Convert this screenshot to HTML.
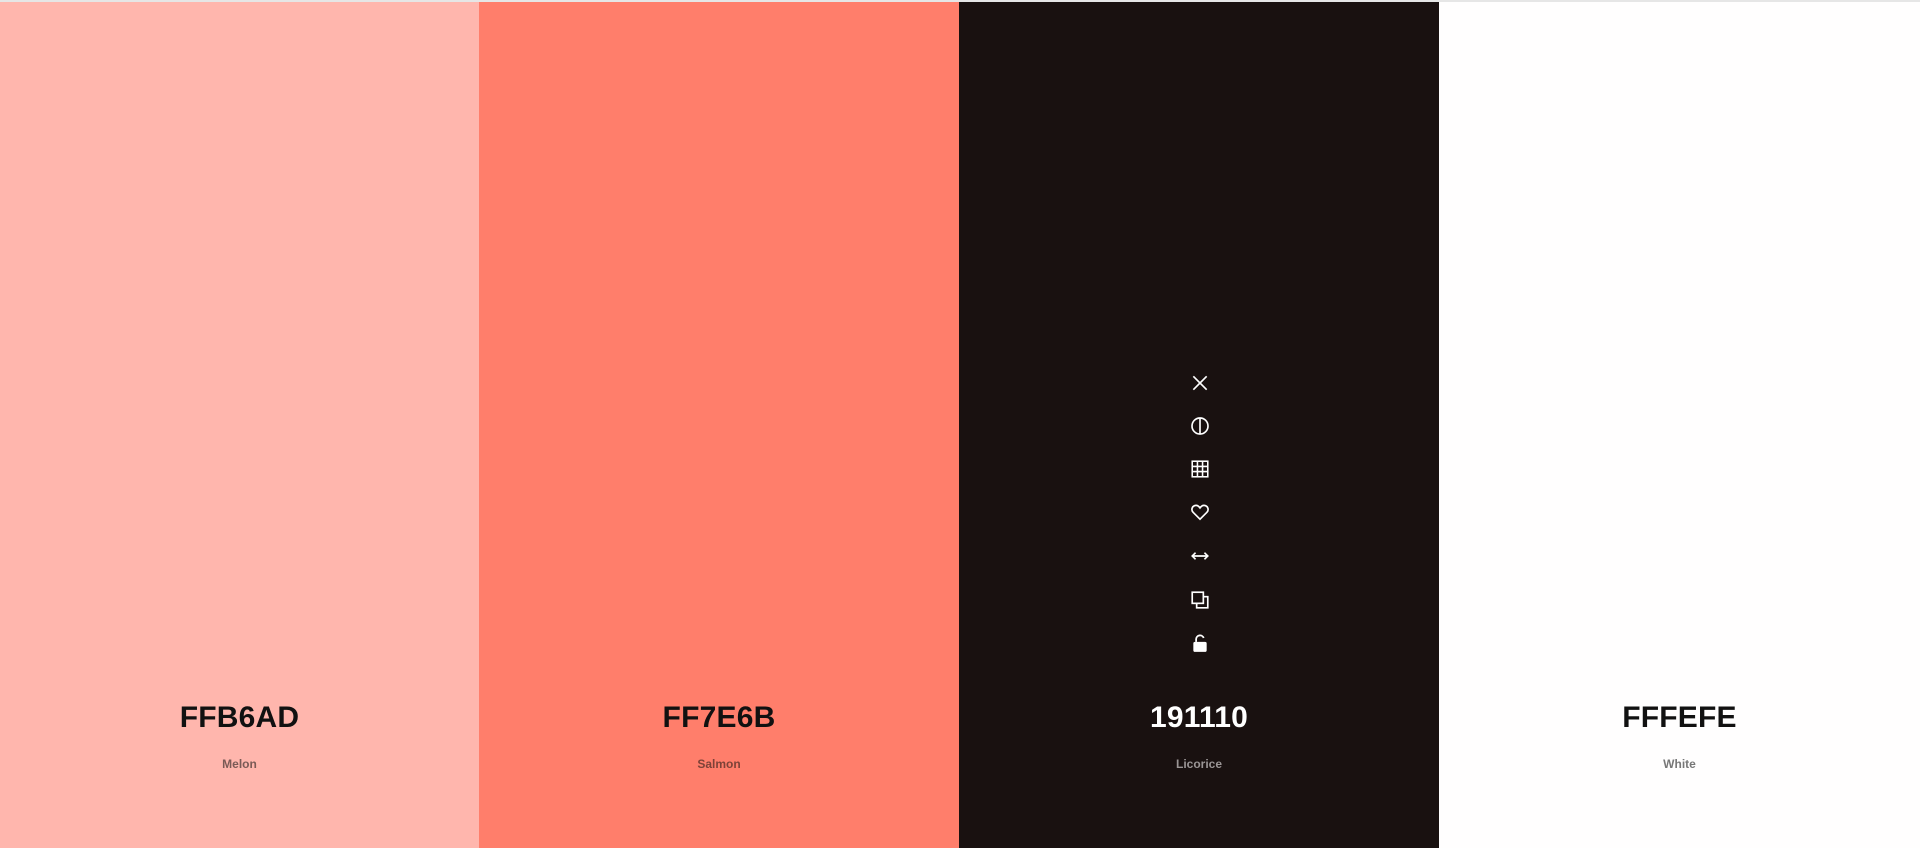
<!DOCTYPE html>
<html><head><style>
*{margin:0;padding:0;box-sizing:border-box}
body{width:1920px;height:848px;overflow:hidden;font-family:"Liberation Sans",sans-serif;background:#fff}
.top{position:absolute;left:0;top:0;width:1920px;height:2px;background:#e6e6e6}
.col{position:absolute;top:2px;height:846px;width:480px}
.hex{position:absolute;left:0;width:100%;top:699px;text-align:center;font-size:30px;font-weight:bold;letter-spacing:0.2px}
.nm{position:absolute;left:0;width:100%;top:755px;text-align:center;font-size:12px;font-weight:bold}
.ic{position:absolute;left:1190px;width:20px;height:20px}
</style></head><body>
<div class="top"></div>
<div class="col" style="left:0;width:479px;background:#FFB6AD"><div class="hex" style="color:#111">FFB6AD</div><div class="nm" style="color:#7a5a56">Melon</div></div>
<div class="col" style="left:479px;background:#FF7E6B"><div class="hex" style="color:#111">FF7E6B</div><div class="nm" style="color:#7d4238">Salmon</div></div>
<div class="col" style="left:959px;background:#191110"><div class="hex" style="color:#fff">191110</div><div class="nm" style="color:#9a9595">Licorice</div></div>
<div class="col" style="left:1439px;width:481px;background:#FFFEFE"><div class="hex" style="color:#111">FFFEFE</div><div class="nm" style="color:#777">White</div></div>
<svg class="ic" style="top:373px" viewBox="0 0 18 18" fill="none" stroke="#fff" stroke-width="1.5"><path d="M3 3L15 15M15 3L3 15"/></svg>
<svg class="ic" style="top:416px" viewBox="0 0 18 18" fill="none" stroke="#fff" stroke-width="1.5"><circle cx="9" cy="9" r="7.2"/><path d="M9 1.8V16.2"/></svg>
<svg class="ic" style="top:459px" viewBox="0 0 18 18" fill="none" stroke="#fff" stroke-width="1.4"><rect x="2" y="2" width="14" height="14"/><path d="M6.7 2V16M11.3 2V16M2 6.7H16M2 11.3H16"/></svg>
<svg class="ic" style="top:502px" viewBox="0 0 18 18" fill="none" stroke="#fff" stroke-width="1.5"><path d="M9 15.5L2.8 9.3C1 7.5 1.5 4.2 4 3.3 6 2.6 7.8 3.6 9 5.3 10.2 3.6 12 2.6 14 3.3 16.5 4.2 17 7.5 15.2 9.3Z"/></svg>
<svg class="ic" style="top:546px" viewBox="0 0 18 18" fill="none" stroke="#fff" stroke-width="1.5"><path d="M2 9H16M5 6L2 9 5 12M13 6L16 9 13 12"/></svg>
<svg class="ic" style="top:590px" viewBox="0 0 18 18" fill="none" stroke="#fff" stroke-width="1.5"><rect x="2" y="2" width="10" height="10"/><path d="M12 6H16V16H6V12"/></svg>
<svg class="ic" style="top:633px" viewBox="0 0 18 18"><rect x="3" y="8" width="12" height="9" rx="1.5" fill="#fff"/><path d="M5.5 8V5.5A3.5 3.5 0 0 1 12.3 4.5" fill="none" stroke="#fff" stroke-width="1.6"/></svg>
</body></html>
